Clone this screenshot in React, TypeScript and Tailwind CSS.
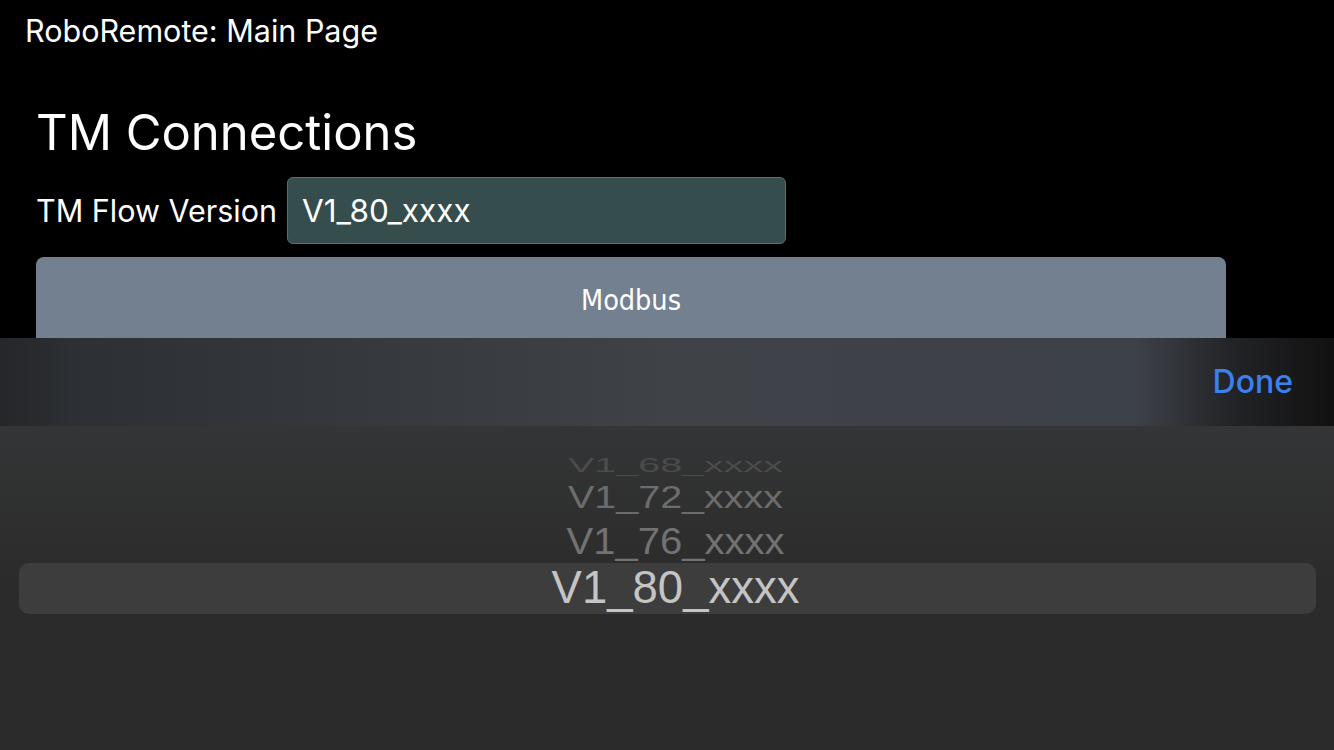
import React from 'react';

const rows = [
  { label: 'V1_68_xxxx', cls: 'text-[#4b4b4b] text-[39.5px] scale-y-[0.5] h-[26px]' },
  { label: 'V1_72_xxxx', cls: 'text-[#6c6c6c] text-[39.5px] scale-y-[0.8] h-[40px]' },
  { label: 'V1_76_xxxx', cls: 'text-[#727272] text-[40px] scale-y-[0.93] h-[46px]' },
];

export default function App() {
  return (
    <div className="relative w-[1334px] h-[750px] overflow-hidden bg-black text-white font-['Inter','Noto_Sans',sans-serif]">
      <div className="pl-[25px] pt-[13px] text-[30.5px] leading-[36px]">RoboRemote: Main Page</div>

      <div className="px-[36px]">
        <h1 className="mt-[58px] text-[49px] leading-[52px] font-normal">TM Connections</h1>
        <div className="mt-[18px] flex items-center gap-[10px]">
          <span className="text-[30.5px] leading-[36px]">TM Flow Version</span>
          <div className="w-[499px] h-[67px] rounded-[6px] border border-[#5b6f6f] bg-[#364d4e] flex items-center px-[14px] text-[31.5px]">
            V1_80_xxxx
          </div>
        </div>
        <button className="mt-[13px] w-[1190px] h-[100px] rounded-t-[8px] bg-[#738090] text-[28.5px] pb-[12px] font-['DejaVu_Sans_Condensed','DejaVu_Sans',sans-serif]">
          Modbus
        </button>
      </div>

      <div className="absolute inset-x-0 bottom-0 h-[412px] flex flex-col">
        <div className="relative h-[88px] bg-gradient-to-r from-[#2a2d31] via-[#3f4348] to-[#3d4148] flex items-center justify-end pr-[41px]">
          <div className="absolute inset-y-0 left-0 w-[70px] bg-gradient-to-r from-[#25272a] to-transparent" />
          <div className="absolute inset-y-0 right-0 w-[200px] bg-gradient-to-r from-transparent via-[#222326] to-[#111111]" />
          <span className="relative text-[#3b80f0] text-[32px] font-medium">Done</span>
        </div>
        <div className="flex-1 bg-gradient-to-b from-[#343536] via-[#2b2b2b] to-[#2b2b2b] flex flex-col items-center pt-[26px] font-['Liberation_Sans',sans-serif]">
          {rows.map((r) => (
            <div key={r.label} className={`pl-[17px] flex items-center justify-center ${r.cls}`}>
              <span className="leading-none">{r.label}</span>
            </div>
          ))}
          <div className="-mt-[1px] w-[1297px] h-[51px] rounded-[10px] bg-[#3d3d3d] flex items-center justify-center pl-[17px] text-[45.5px] text-[#c4c4c4]">
            V1_80_xxxx
          </div>
        </div>
      </div>
    </div>
  );
}
